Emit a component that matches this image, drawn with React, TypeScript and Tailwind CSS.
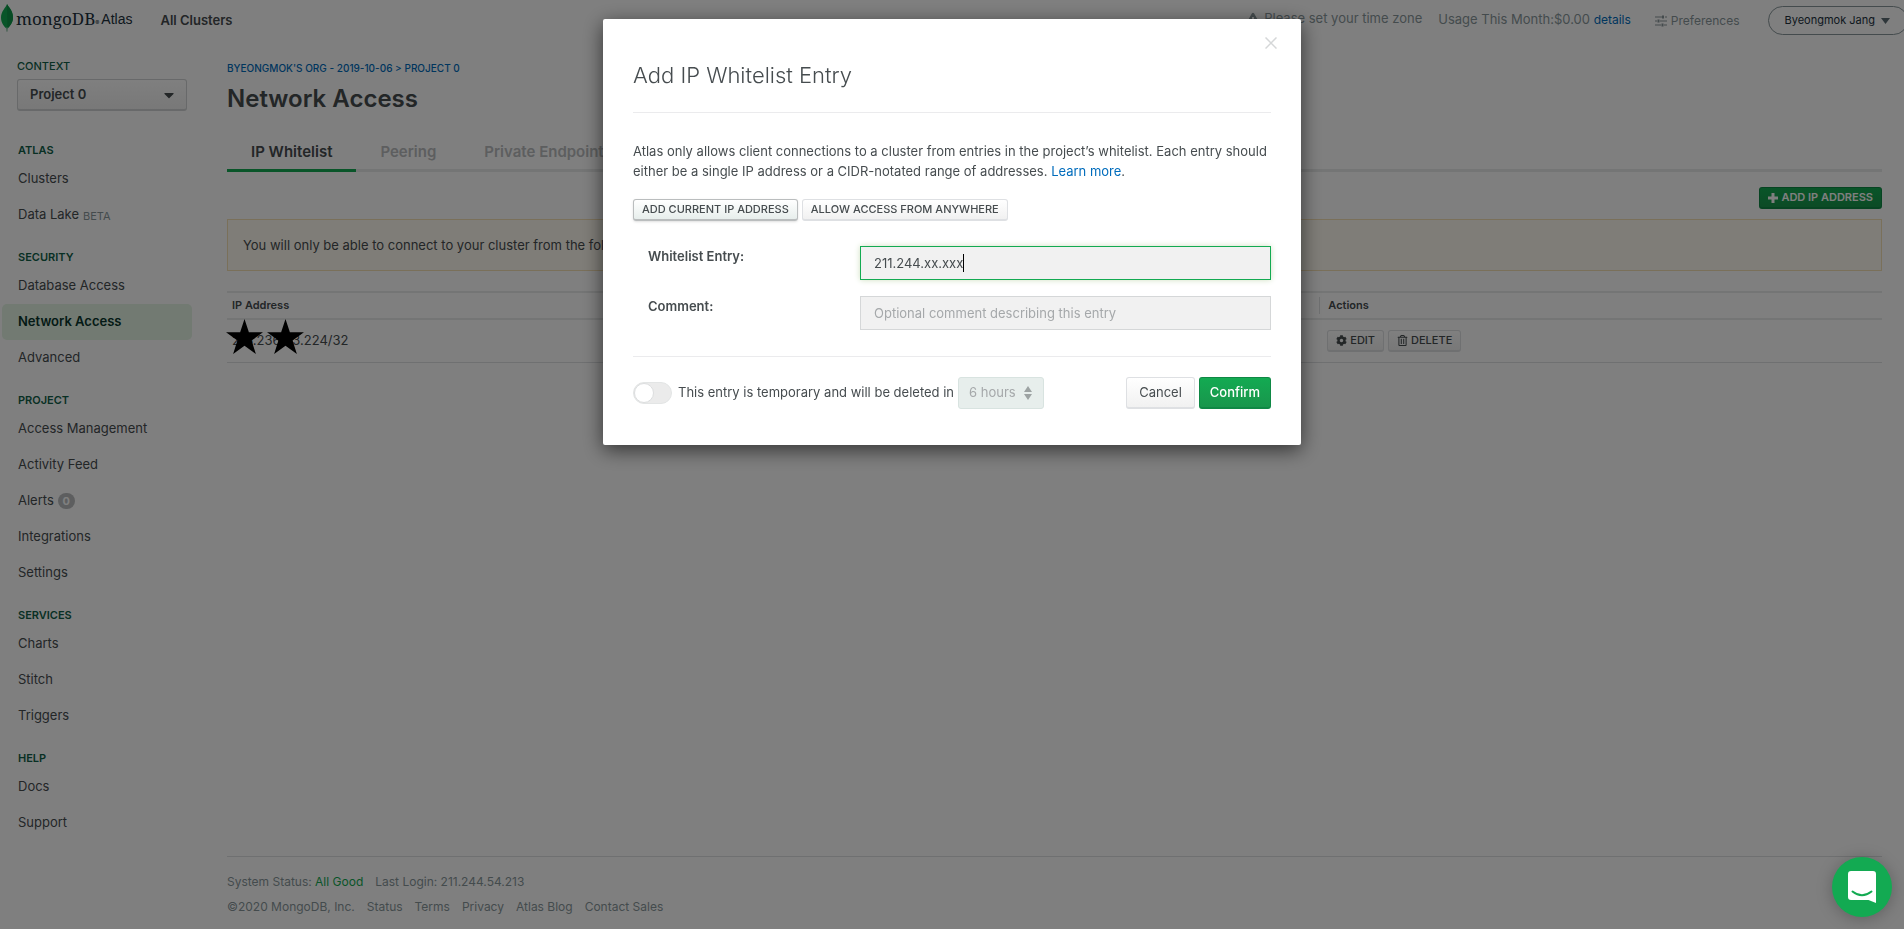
import { useState } from 'react'
import type { ReactNode } from 'react'
import { FaCaretDown, FaCog, FaExclamationTriangle, FaRegTrashAlt } from 'react-icons/fa'

interface NavItem {
  label: string
  tag?: string
  count?: number
  active?: boolean
}

interface NavGroup {
  title: string
  items: NavItem[]
}

const navGroups: NavGroup[] = [
  { title: 'ATLAS', items: [{ label: 'Clusters' }, { label: 'Data Lake', tag: 'BETA' }] },
  {
    title: 'SECURITY',
    items: [{ label: 'Database Access' }, { label: 'Network Access', active: true }, { label: 'Advanced' }],
  },
  {
    title: 'PROJECT',
    items: [
      { label: 'Access Management' },
      { label: 'Activity Feed' },
      { label: 'Alerts', count: 0 },
      { label: 'Integrations' },
      { label: 'Settings' },
    ],
  },
  { title: 'SERVICES', items: [{ label: 'Charts' }, { label: 'Stitch' }, { label: 'Triggers' }] },
  { title: 'HELP', items: [{ label: 'Docs' }, { label: 'Support' }] },
]

const footerLinks = ['Status', 'Terms', 'Privacy', 'Atlas Blog', 'Contact Sales']

function Logo() {
  return (
    <a href="#" className="flex items-center">
      <svg viewBox="0 0 14 28" className="h-7 w-[14px]">
        <path d="M7 0C7.6 2 13 6 13 13.500C13 19 9.500 22.500 7.400 24.500L7.300 27.500H6.700L6.500 24.500C4 22.500 1 19 1 13.500C1 7 6 3.500 7 0Z" fill="#13aa52" />
        <path d="M7 0C7.600 2 13 6 13 13.500C13 19 9.500 22.500 7.400 24.500Z" fill="#0f9648" />
        <path d="M6.700 23L6.500 27.500H7.400L7.300 23Z" fill="#b8c4c2" />
      </svg>
      <span className="ml-0.5 pt-0.5 font-['Noto_Serif','Liberation_Serif',serif] text-[17px] leading-7 text-[#21313c]">mongoDB</span>
      <span className="mt-2 text-[6px] text-[#21313c]">®</span>
      <span className="ml-0.5 pt-0.5 font-['Liberation_Sans',Arial,sans-serif] text-sm text-[#21313c]">Atlas</span>
    </a>
  )
}

function PreferencesIcon() {
  return (
    <svg viewBox="0 0 12 12" className="h-3 w-3 fill-current">
      <path d="M0 1.500h7v1H0zM10 1.500h2v1h-2zM0 5.500h2v1H0zM5 5.500h7v1H5zM0 9.500h6v1H0zM9 9.500h3v1H9zM7 .5h2v3H7zM2.500 4.500h2v3h-2zM6.500 8.500h2v3h-2z" />
    </svg>
  )
}

function PlusIcon() {
  return (
    <svg viewBox="0 0 10 10" className="size-2.5 fill-current">
      <path d="M3.500 0H6.500V3.500H10V6.500H6.500V10H3.500V6.500H0V3.500H3.500Z" />
    </svg>
  )
}

function Star() {
  return (
    <svg viewBox="0 0 38 36" className="h-[35px] w-[37px]">
      <path d="M19 0L23.500 13.700H38L26.300 22.200L30.700 36L19 27.500L7.300 36L11.700 22.200L0 13.700H14.500Z" fill="#000" />
    </svg>
  )
}

function SmallButton({ children, strong }: { children: ReactNode; strong?: boolean }) {
  return (
    <button
      type="button"
      className={`flex h-[22px] items-center gap-[3px] rounded-[3px] border border-b-2 bg-linear-to-b from-white px-2 text-[11px] font-medium whitespace-nowrap text-[#464c4f] ${
        strong ? 'border-[#babdbe] to-[#e7eeec] shadow-sm' : 'border-[#dee0e3] to-[#f1f1f1]'
      }`}
    >
      {children}
    </button>
  )
}

function Header() {
  return (
    <header className="flex h-[41px] items-start justify-between pt-[3px]">
      <div className="flex items-center gap-7">
        <Logo />
        <a href="#" className="pt-1.5 text-[13px] font-semibold text-[#464c4f]">All Clusters</a>
      </div>
      <div className="flex items-center pt-[3px] text-[13px] text-[#89979b]">
        <span className="flex h-7 items-center gap-1 pb-1">
          <FaExclamationTriangle className="size-[14px]" />
          Please set your time zone
        </span>
        <span className="ml-4 pb-0.5">
          Usage This Month:$0.00 <a href="#" className="text-xs text-[#006cbc]">details</a>
        </span>
        <a href="#" className="ml-6 flex items-center gap-1 text-xs">
          <PreferencesIcon />
          Preferences
        </a>
        <button
          type="button"
          className="ml-7 -mr-1 flex h-[29px] items-center gap-1.5 rounded-full border border-[#89979b] pr-[17px] pl-4 text-[11px] text-[#21313c]"
        >
          Byeongmok Jang
          <svg viewBox="0 0 9 6" className="h-1.5 w-[9px] fill-[#5d6c74]"><path d="M0 0H9L4.500 6Z" /></svg>
        </button>
      </div>
    </header>
  )
}

function Sidebar() {
  return (
    <aside className="w-[194px] shrink-0 pl-0.5">
      <div className="pt-4 pl-[15px]">
        <label htmlFor="context" className="block text-[11px] leading-[18px] font-medium text-[#116149]">CONTEXT</label>
        <div className="relative mt-1 w-[170px]">
          <select
            id="context"
            className="h-8 w-full appearance-none rounded-[3px] border border-b-2 border-[#d0d3d4] bg-linear-to-b from-white to-[#f1f1f1] px-3 text-[13px] font-semibold text-[#464c4f]"
          >
            <option>Project 0</option>
          </select>
          <FaCaretDown className="pointer-events-none absolute top-2 right-2.5 text-base text-[#464c4f]" />
        </div>
      </div>
      <nav className="flex flex-col gap-[13px] pt-7">
        {navGroups.map((group) => (
          <section key={group.title}>
            <h2 className="pl-4 text-[11px] leading-[22px] font-semibold text-[#116149]">{group.title}</h2>
            {group.items.map((item) => (
              <a
                key={item.label}
                href="#"
                className={`flex h-9 w-[190px] items-center gap-1 rounded-[5px] pl-4 text-[13px] ${
                  item.active ? 'bg-[#e4f4e4] font-semibold text-[#09352c]' : 'text-[#464c4f]'
                }`}
              >
                {item.label}
                {item.tag && <span className="pt-0.5 text-[11px] text-[#89979b]">{item.tag}</span>}
                {item.count !== undefined && (
                  <span className="flex h-4 w-[17px] items-center justify-center rounded-full bg-[#babdbe] text-[11px] font-bold text-white">
                    {item.count}
                  </span>
                )}
              </a>
            ))}
          </section>
        ))}
      </nav>
    </aside>
  )
}

function NetworkAccess() {
  return (
    <main className="flex grow flex-col pr-[22px] pl-[33px]">
      <div className="pt-[18px] text-[10px] leading-[18px] font-medium text-[#006cbc]">
        <a href="#">BYEONGMOK'S ORG - 2019-10-06</a> &gt; <a href="#">PROJECT 0</a>
      </div>
      <h1 className="mt-1.5 text-2xl leading-8 font-semibold text-[#464c4f]">Network Access</h1>
      <div className="mt-5 flex border-b-3 border-[#e8eaea] text-[15px] leading-[34px] font-semibold text-[#babdbe]">
        <a href="#" className="-mb-[3px] border-b-3 border-[#13aa52] px-6 text-[#464c4f]">IP Whitelist</a>
        <a href="#" className="px-6">Peering</a>
        <a href="#" className="px-6">Private Endpoint</a>
      </div>
      <div className="mt-[15px] flex justify-end">
        <button
          type="button"
          className="flex h-[22px] items-center gap-[3px] rounded-[3px] border border-b-2 border-[#0f8845] bg-linear-to-b from-[#13aa52] to-[#18964c] px-2 text-[11px] font-semibold text-white"
        >
          <PlusIcon />
          ADD IP ADDRESS
        </button>
      </div>
      <p className="mt-2.5 border border-[#f5e0b5] bg-[#fffbf0] px-[15px] py-[15px] text-[13px] leading-5 text-[#464c4f]">
        You will only be able to connect to your cluster from the following list of IP Addresses:
      </p>
      <table className="mt-5 w-full text-left">
        <thead className="border-y-2 border-[#e8eaea]">
          <tr className="h-[27px] text-[11px] text-[#464c4f]">
            <th className="w-[66%] py-1 pl-[5px] font-semibold">IP Address</th>
            <th className="py-1 font-semibold"><span className="block border-l border-[#dee0e3] pl-2">Actions</span></th>
          </tr>
        </thead>
        <tbody>
          <tr className="h-[43px] border-b border-[#dee0e3] text-[13px] text-[#464c4f]">
            <td className="relative pl-[5px]">
              216.236.43.224/32
              <span className="absolute -top-px -left-px flex gap-1"><Star /><Star /></span>
            </td>
            <td>
              <div className="flex gap-1 pl-2">
                <SmallButton><FaCog />EDIT</SmallButton>
                <SmallButton><FaRegTrashAlt />DELETE</SmallButton>
              </div>
            </td>
          </tr>
        </tbody>
      </table>
      <footer className="mt-auto border-t border-[#dee0e3] pt-3 pb-2.5 text-xs leading-[25px] text-[#89979b]">
        <div className="flex gap-3">
          <span>System Status: <a href="#" className="text-[#13aa52]">All Good</a></span>
          <span>Last Login: 211.244.54.213</span>
        </div>
        <div className="flex gap-3">
          <span>©2020 MongoDB, Inc.</span>
          {footerLinks.map((link) => (
            <a key={link} href="#">{link}</a>
          ))}
        </div>
      </footer>
    </main>
  )
}

function WhitelistDialog() {
  const [entry, setEntry] = useState('211.244.xx.xxx')
  const [temporary, setTemporary] = useState(false)

  return (
    <div
      role="dialog"
      aria-labelledby="dialog-title"
      className="relative w-full max-w-[698px] rounded-xs bg-white px-[30px] pt-10 pb-9 text-[13px] text-[#464c4f] shadow-[0_5px_20px_rgba(0,0,0,0.6)]"
    >
      <button type="button" aria-label="Close" className="absolute top-[18px] right-6">
        <svg viewBox="0 0 12 12" className="h-3 w-3 stroke-[#d5d7d8]"><path d="M.5 .5L11.500 11.500M11.500 .5L.5 11.500" strokeWidth="1.500" /></svg>
      </button>
      <h2 id="dialog-title" className="border-b border-[#ebebed] pb-[21px] text-[22px] leading-8 font-light">Add IP Whitelist Entry</h2>
      <p className="mt-7 leading-5">
        Atlas only allows client connections to a cluster from entries in the project’s whitelist. Each entry should
        either be a single IP address or a CIDR-notated range of addresses.{' '}
        <a href="#" className="text-[#006cbc]">Learn more</a>.
      </p>
      <div className="mt-[18px] flex gap-1">
        <SmallButton strong>ADD CURRENT IP ADDRESS</SmallButton>
        <SmallButton>ALLOW ACCESS FROM ANYWHERE</SmallButton>
      </div>
      <div className="mt-[25px] flex flex-col gap-4 pb-[26px] pl-[15px] leading-5">
        <div className="flex items-start">
          <label htmlFor="entry" className="grow font-semibold">Whitelist Entry:</label>
          <div className="relative w-[411px]">
            <input
              id="entry"
              value={entry}
              onChange={(e) => setEntry(e.target.value)}
              className="h-[34px] w-full border border-[#13aa52] bg-[#f1f1f1] px-[13px] shadow-[0_0_6px_#cfe0c0]"
            />
            <span className="absolute top-2 left-[103px] h-[18px] w-px bg-black" />
          </div>
        </div>
        <div className="flex items-start">
          <label htmlFor="comment" className="grow font-semibold">Comment:</label>
          <input
            id="comment"
            placeholder="Optional comment describing this entry"
            className="h-[34px] w-[411px] border border-[#d5d7d8] bg-[#f1f1f1] px-[13px] placeholder:text-[#a5a8aa]"
          />
        </div>
      </div>
      <div className="flex items-center border-t border-[#ebebed] pt-5">
        <label className="flex items-center gap-1.5">
          <input
            type="checkbox"
            checked={temporary}
            onChange={(e) => setTemporary(e.target.checked)}
            className="h-[22px] w-[39px] appearance-none rounded-full border border-[#e3e5e5] bg-[#ebebeb] before:block before:size-5 before:rounded-full before:border before:border-[#dcdedf] before:bg-white checked:before:ml-[17px]"
          />
          This entry is temporary and will be deleted in
        </label>
        <div className="relative ml-1">
          <select
            aria-label="Delete after"
            disabled
            className="h-8 w-[86px] appearance-none rounded-[3px] border border-[#d8e3e0] bg-[#e7eeec] px-2.5 text-[13px] text-[#a5a8aa]"
          >
            <option>6 hours</option>
          </select>
          <svg viewBox="0 0 8 14" className="pointer-events-none absolute top-[9px] right-3 h-[14px] w-2 fill-[#9da3a3]">
            <path d="M4 0L8 6H0ZM0 8H8L4 14Z" />
          </svg>
        </div>
        <div className="ml-auto flex gap-1">
          <button type="button" className="h-8 rounded-[3px] border border-b-2 border-[#dee0e3] bg-linear-to-b from-white to-[#f1f1f1] px-3">
            Cancel
          </button>
          <button type="button" className="h-8 rounded-[3px] border border-b-2 border-[#0f8845] bg-linear-to-b from-[#13aa52] to-[#18964c] px-2.5 font-medium text-white">
            Confirm
          </button>
        </div>
      </div>
    </div>
  )
}

export default function App() {
  return (
    <div className="flex min-h-screen flex-col overflow-x-hidden bg-white font-[Inter,'Liberation_Sans',sans-serif]">
      <Header />
      <div className="flex grow">
        <Sidebar />
        <NetworkAccess />
      </div>

      {/* Modal overlay */}
      <div className="fixed inset-0 flex items-start justify-center bg-black/50 pt-[19px]">
        <WhitelistDialog />
      </div>

      {/* Chat launcher */}
      <button
        type="button"
        aria-label="Open chat"
        className="fixed right-3 bottom-3 flex size-[60px] items-center justify-center rounded-full bg-[#13aa52] shadow-[0_2px_16px_rgba(0,0,0,0.25)]"
      >
        <svg viewBox="0 0 28 32" className="h-8 w-7">
          <path d="M3 0H25Q28 0 28 3V32L20.500 29H3Q0 29 0 26V3Q0 0 3 0Z" fill="#fff" />
          <path d="M4.500 20.500Q14 28 23.500 20.500" fill="none" stroke="#13aa52" strokeWidth="2" strokeLinecap="round" />
        </svg>
      </button>
    </div>
  )
}
